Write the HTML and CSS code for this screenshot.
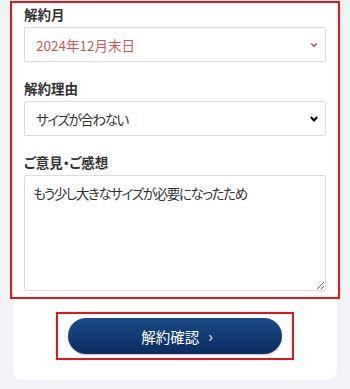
FILE: index.html
```html
<!DOCTYPE html>
<html lang="ja">
<head>
<meta charset="utf-8">
<link rel="stylesheet" href="styles.css">
</head>
<body>
<div class="card">
  <div class="form">
    <label class="label">解約月</label>
    <div class="select-wrap">
      <select class="select select-red">
        <option>2024年12月末日</option>
      </select>
      <svg class="chev" width="10" height="8" viewBox="0 0 10 8"><path d="M2.2 2.5 L5 5.3 L7.8 2.5" fill="none" stroke="#c8464b" stroke-width="1.5"/></svg>
    </div>
    <label class="label">解約理由</label>
    <div class="select-wrap">
      <select class="select select-kana">
        <option>サイズが合わない</option>
      </select>
      <svg class="chev" width="10" height="8" viewBox="0 0 10 8"><path d="M1.8 2 L5 5.4 L8.2 2" fill="none" stroke="#111" stroke-width="2.2"/></svg>
    </div>
    <label class="label">ご意見・ご感想</label>
    <textarea class="textarea">もう少し大きなサイズが必要になったため</textarea>
  </div>
  <div class="btn-box">
    <button class="btn">解約確認<span class="arrow">›</span></button>
  </div>
</div>
</body>
</html>
```
FILE: styles.css
```css
* { box-sizing: border-box; }
html, body { margin: 0; padding: 0; }
body {
  background: #f2f3f6;
  font-family: "Noto Sans CJK JP", "Noto Sans", sans-serif;
  font-feature-settings: "palt";
  color: #333;
  width: 350px;
  height: 389px;
  overflow: hidden;
}
.card {
  margin: 0 13px;
  background: #fff;
  border-radius: 0 0 10px 10px;
  padding-bottom: 20px;
}
.form {
  margin: 1px -3px 0;
  border: 2px solid #e3151d;
  padding: 1px 12px 6px;
  display: flex;
  flex-direction: column;
}
.label {
  display: block;
  font-size: 13.5px;
  font-weight: 700;
  line-height: 20px;
  margin-bottom: 3px;
  color: #333;
}
.select-wrap {
  position: relative;
  margin-bottom: 16px;
}
.select {
  display: block;
  width: 100%;
  height: 35px;
  appearance: none;
  -webkit-appearance: none;
  border: 1px solid #dcdcdc;
  border-radius: 2px;
  background: #fff;
  font-family: inherit;
  font-feature-settings: "palt";
  font-size: 13.5px;
  color: #333;
  padding: 0 30px 0 11px;
  outline: none;
}
.select-red { color: #c95a5c; }
.select-kana { letter-spacing: -1.4px; }
.chev {
  position: absolute;
  right: 7px;
  top: 14px;
  pointer-events: none;
}
.textarea {
  display: block;
  width: 100%;
  height: 116px;
  border: 1px solid #dcdcdc;
  border-radius: 2px;
  font-family: inherit;
  font-feature-settings: "palt";
  font-size: 13.5px;
  line-height: 20px;
  letter-spacing: -1.4px;
  color: #333;
  padding: 7px 8px;
  resize: vertical;
  outline: none;
}
.btn-box {
  width: 238px;
  margin: 13px auto 0;
  border: 2px solid #e3151d;
  padding: 4px 10px;
}
.btn {
  display: flex;
  align-items: center;
  justify-content: center;
  width: 100%;
  height: 36px;
  border: none;
  border-radius: 18px;
  background: linear-gradient(#1a4a88, #0b2c5e);
  color: #fff;
  font-family: inherit;
  font-size: 14.5px;
  padding: 0 0 0 4px;
  box-shadow: 0 1px 2px rgba(0,0,0,0.25);
}
.arrow {
  margin-left: 9px;
  font-size: 15px;
  position: relative;
  top: -1px;
}
```
